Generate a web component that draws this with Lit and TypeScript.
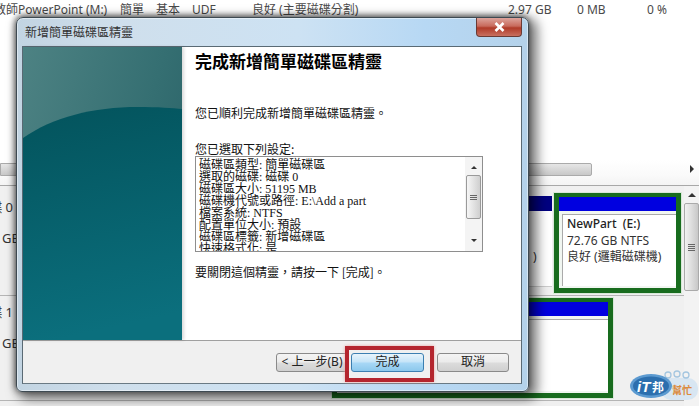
import { LitElement, html, css } from "lit";
import { customElement } from "lit/decorators.js";

@customElement("app-root")
export class AppRoot extends LitElement {
  static styles = css`
    :host { display: block; width: 699px; height: 406px; position: relative; overflow: hidden; background: #fff;
      font-family: "Noto Sans", "Noto Sans CJK TC", sans-serif; color: #222; }
    * { box-sizing: border-box; }
    .vol { display: grid; grid-template-columns: 126px 36px 36px 60px 256px 69px 70px 30px; margin-left: -6px; padding-top: 2px; font-size: 12px; line-height: 16px; color: #4a4a4a; white-space: nowrap; }
    .lower { position: absolute; left: 0; right: 0; top: 160px; bottom: 0; background: #f0f0f0; display: flex; flex-direction: column; }
    .hscroll { height: 26px; flex: none; padding: 3px 0 0; border-bottom: 1px solid #a8a8a8; background: linear-gradient(#fff 0,#fafafa 60%,#f4f4f4 100%); display: flex; align-items: flex-start; }
    .hthumb { width: 592px; height: 13px; background: linear-gradient(#e6e6e6,#c8c8c8); border: 1px solid #aaa; border-radius: 0 2px 2px 0; }
    .harrow { margin: 2px 0 0 98px; width: 0; height: 0; border-left: 4px solid #333; border-top: 4px solid transparent; border-bottom: 4px solid transparent; }
    .disks { flex: 1; display: flex; min-height: 0; }
    .rows { flex: 1; display: flex; flex-direction: column; }
    .row { height: 110px; flex: none; border-bottom: 1px solid #b5b5b5; position: relative; font-size: 13px; color: #333; }
    .row.two { height: 105px; }
    .lbl { position: absolute; left: 0; top: 11px; width: 13px; display: flex; justify-content: flex-end; white-space: nowrap; overflow: hidden; }
    .lbl span { flex: none; }
    .gb { position: absolute; left: 2px; top: 43px; }
    .two .lbl { top: 6px; }
    .two .gb { top: 38px; }
    .part { position: absolute; border: 5px solid #186c1e; box-shadow: 0 0 0 1px #d8e8d8; background: #f1f6f1; }
    .p1 { left: 554px; top: 7px; width: 127px; height: 100px; }
    .p2 { left: 332px; top: 2px; width: 281px; height: 100px; }
    .head { height: 14px; background: #0000e0; margin-top: -1px; }
    .pbody { margin: 3px 0 0 3px; height: 72px; background: #fff; border-left: 1px solid #aaa; border-top: 1px solid #aaa; padding: 1px 0 0 4px; font-size: 12px; line-height: 16.5px; color: #333; white-space: nowrap; }
    .pbody b { font-weight: 500; color: #222; display: block; font-size: 12px; }
    .dark { position: absolute; left: 300px; width: 252px; height: 15px; top: 10px; background: #000080; }
    .side { position: absolute; left: 520px; width: 32px; top: 25px; height: 76px; background: #fff; border-bottom: 1px solid #ccc; }
    .side span { position: absolute; left: 13px; top: 37px; font-size: 12px; }
    .vs { width: 15px; flex: none; display: flex; flex-direction: column; align-items: center; padding-top: 7px; background: #f3f3f3; }
    .up { width: 0; height: 0; border-bottom: 4px solid #333; border-left: 4px solid transparent; border-right: 4px solid transparent; }
    .vthumb { width: 15px; height: 88px; margin-top: 6px; background: linear-gradient(90deg,#f2f2f2,#c8c8c8); border: 1px solid #aaa; border-radius: 2px; display: flex; flex-direction: column; gap: 1px; align-items: center; justify-content: center; }
    .vthumb i, .sthumb i { display: block; width: 7px; height: 1px; background: #666; }
    .logo { position: absolute; left: 627px; top: 366px; width: 72px; height: 40px; }

    .win { position: absolute; left: 16px; top: 17px; width: 513px; height: 375px; padding: 0 6px 7px 5px; border-radius: 7px 7px 6px 6px;
      background: linear-gradient(90deg,#c2d4e2 0,#cfdfec 20%,#cde2f3 55%,#b7d8f4 80%,#b4d2ea 100%);
      border: 1px solid #3e4a52; box-shadow: inset 0 0 0 1px rgba(255,255,255,.45), 5px 4px 12px 3px rgba(0,0,0,.55), -2px 0 6px rgba(0,0,0,.35), 0 -2px 5px rgba(0,0,0,.3); display: flex; flex-direction: column; }
    .title { height: 28px; flex: none; display: flex; align-items: flex-start; justify-content: space-between; font-size: 12px; color: #333; }
    .title span { padding: 7px 0 0 3px; line-height: 16px; }
    .close { width: 46px; height: 19px; background: linear-gradient(#dda49c 0,#c86a5c 45%,#b03a28 55%,#c87060 100%); border: 1px solid #6a3a34; border-top: 0; border-radius: 0 0 4px 4px; display: flex; align-items: center; justify-content: center; }
    .client { flex: 1; background: #fff; border: 1px solid #5a6a74; border-bottom-color: #6a7a84; display: flex; flex-direction: column; min-height: 0; }
    .main { flex: 1; display: flex; min-height: 0; }
    .banner { width: 159px; flex: none; position: relative; overflow: hidden; background: linear-gradient(105deg,#4d8283 0,#356f72 60%,#275f65 100%); box-shadow: 2px 0 3px rgba(0,0,0,.15); }
    .banner svg { position: absolute; inset: 0; }
    .content { flex: 1; padding: 6px 14px 0 13px; font-family: "Liberation Serif", "Noto Sans CJK TC", serif; font-size: 12px; color: #111; min-width: 0; display: flex; flex-direction: column; }
    .h { font-size: 17px; font-weight: 700; line-height: 20px; color: #000; }
    .p1t { margin-top: 32px; line-height: 16px; font-family: "Noto Sans CJK TC", sans-serif; }
    .p2t { margin-top: 20px; line-height: 15px; font-family: "Noto Sans CJK TC", sans-serif; }
    .list { height: 96px; width: 288px; border: 1px solid #8e8e8e; display: flex; overflow: hidden; flex: none; }
    .lt { flex: 1; padding: 2px 0 0 3px; font-size: 12px; line-height: 12px; white-space: nowrap; overflow: hidden; color: #111; }
    .ss { width: 17px; flex: none; background: #f4f4f4; display: flex; flex-direction: column; align-items: center; padding: 9px 0; }
    .sthumb { width: 15px; height: 44px; margin-top: 6px; background: linear-gradient(90deg,#f6f6f6,#cfcfcf); border: 1px solid #9a9a9a; border-radius: 2px; display: flex; flex-direction: column; gap: 1px; align-items: center; justify-content: center; }
    .a-u { width: 0; height: 0; border-bottom: 3px solid #333; border-left: 3px solid transparent; border-right: 3px solid transparent; }
    .a-d { margin-top: auto; width: 0; height: 0; border-top: 3px solid #333; border-left: 3px solid transparent; border-right: 3px solid transparent; }
    .p3t { margin-top: 12px; line-height: 16px; font-family: "Noto Sans CJK TC", sans-serif; }
    .foot { height: 43px; flex: none; background: #f0f0f0; border-top: 1px solid #a0a0a0; display: flex; justify-content: flex-end; align-items: flex-start; padding: 12px 12px 0 0; }
    .btn { width: 72px; height: 19px; border: 1px solid #8a8a8a; border-radius: 3px; background: linear-gradient(#f4f4f4 0,#ebebeb 48%,#dcdcdc 52%,#d0d0d0 100%); font-size: 12px; line-height: 16px; text-align: center; color: #222; white-space: nowrap; }
    .btn.go { width: 73px; margin: 0 13px 0 3px; border-color: #3c7fb1; background: linear-gradient(#e8f4fc 0,#c4e4f8 48%,#a8d8f6 52%,#8cc8ec 100%); }
    .hl { position: absolute; left: 345px; top: 346px; width: 89px; height: 36px; border: 4px solid #b4252e; box-shadow: 0 0 3px #e8a0a0; pointer-events: none; }
  `;

  render() {
    return html`
      <div class="vol">
        <span>教師PowerPoint (M:)</span><span>簡單</span><span>基本</span><span>UDF</span><span>良好 (主要磁碟分割)</span><span>2.97 GB</span><span>0 MB</span><span>0 %</span>
      </div>
      <div class="lower">
        <div class="hscroll"><div class="hthumb"></div><div class="harrow"></div></div>
        <div class="disks">
          <div class="rows">
            <div class="row">
              <div class="lbl"><span>磁碟 0</span></div><span class="gb">GB</span>
              <div class="dark"></div>
              <div class="side"><span>)</span></div>
              <div class="part p1"><div class="head"></div><div class="pbody"><b>NewPart&nbsp; (E:)</b>72.76 GB NTFS<br>良好 (邏輯磁碟機)</div></div>
            </div>
            <div class="row two">
              <div class="lbl"><span>磁碟 1</span></div><span class="gb">GB</span>
              <div class="part p2"><div class="head"></div><div class="pbody"></div></div>
            </div>
          </div>
          <div class="vs"><div class="up"></div><div class="vthumb"><i></i><i></i><i></i><i></i></div></div>
        </div>
      </div>
      <svg class="logo" viewBox="0 0 72 40">
        <rect x="34" y="12" width="37" height="22" rx="10" fill="#d8e6f2"/>
        <g fill="none" stroke="#a4c6e0" stroke-width="1.3"><circle cx="41" cy="9" r="3"/><circle cx="50" cy="8" r="3"/><circle cx="59" cy="9" r="3"/></g>
        <ellipse cx="24" cy="20" rx="21" ry="12" fill="#5c9ad0"/>
        <ellipse cx="24" cy="20" rx="18" ry="9.5" fill="#2c6fae"/>
        <text x="10" y="26" font-family="Liberation Sans" font-size="15" font-weight="700" font-style="italic" fill="#fff">iT</text>
        <text x="25" y="26" font-family="Noto Sans CJK TC" font-size="12" font-weight="700" fill="#fff">邦</text>
        <text x="45" y="28" font-family="Noto Sans CJK TC" font-size="10" font-weight="700" fill="#dc8a3c">幫忙</text>
      </svg>

      <div class="win">
        <div class="title"><span>新增簡單磁碟區精靈</span>
          <div class="close"><svg width="11" height="10" viewBox="0 0 11 10"><path d="M1.5 1 L9.5 9 M9.5 1 L1.5 9" stroke="#fff" stroke-width="2.6"/></svg></div>
        </div>
        <div class="client">
          <div class="main">
            <div class="banner">
              <svg width="159" height="295" viewBox="0 0 159 295">
                <defs><linearGradient id="g" x1="0" y1="0" x2="0.15" y2="1"><stop offset="0" stop-color="#03535c"/><stop offset="1" stop-color="#0b6f7d"/></linearGradient></defs>
                <path d="M0 91 C30 70 70 60 115 60 C135 60 150 61 159 62 L159 295 L0 295 Z" fill="url(#g)"/>
              </svg>
            </div>
            <div class="content">
              <div class="h">完成新增簡單磁碟區精靈</div>
              <div class="p1t">您已順利完成新增簡單磁碟區精靈。</div>
              <div class="p2t">您已選取下列設定:</div>
              <div class="list">
                <div class="lt">磁碟區類型: 簡單磁碟區<br>選取的磁碟: 磁碟 0<br>磁碟區大小: 51195 MB<br>磁碟機代號或路徑: E:\\Add a part<br>檔案系統: NTFS<br>配置單位大小: 預設<br>磁碟區標籤: 新增磁碟區<br>快速格式化: 是</div>
                <div class="ss"><div class="a-u"></div><div class="sthumb"><i></i><i></i><i></i></div><div class="a-d"></div></div>
              </div>
              <div class="p3t">要關閉這個精靈，請按一下 [完成]。</div>
            </div>
          </div>
          <div class="foot">
            <div class="btn">&lt; 上一步(B)</div>
            <div class="btn go">完成</div>
            <div class="btn">取消</div>
          </div>
        </div>
      </div>
      <div class="hl"></div>
    `;
  }
}
